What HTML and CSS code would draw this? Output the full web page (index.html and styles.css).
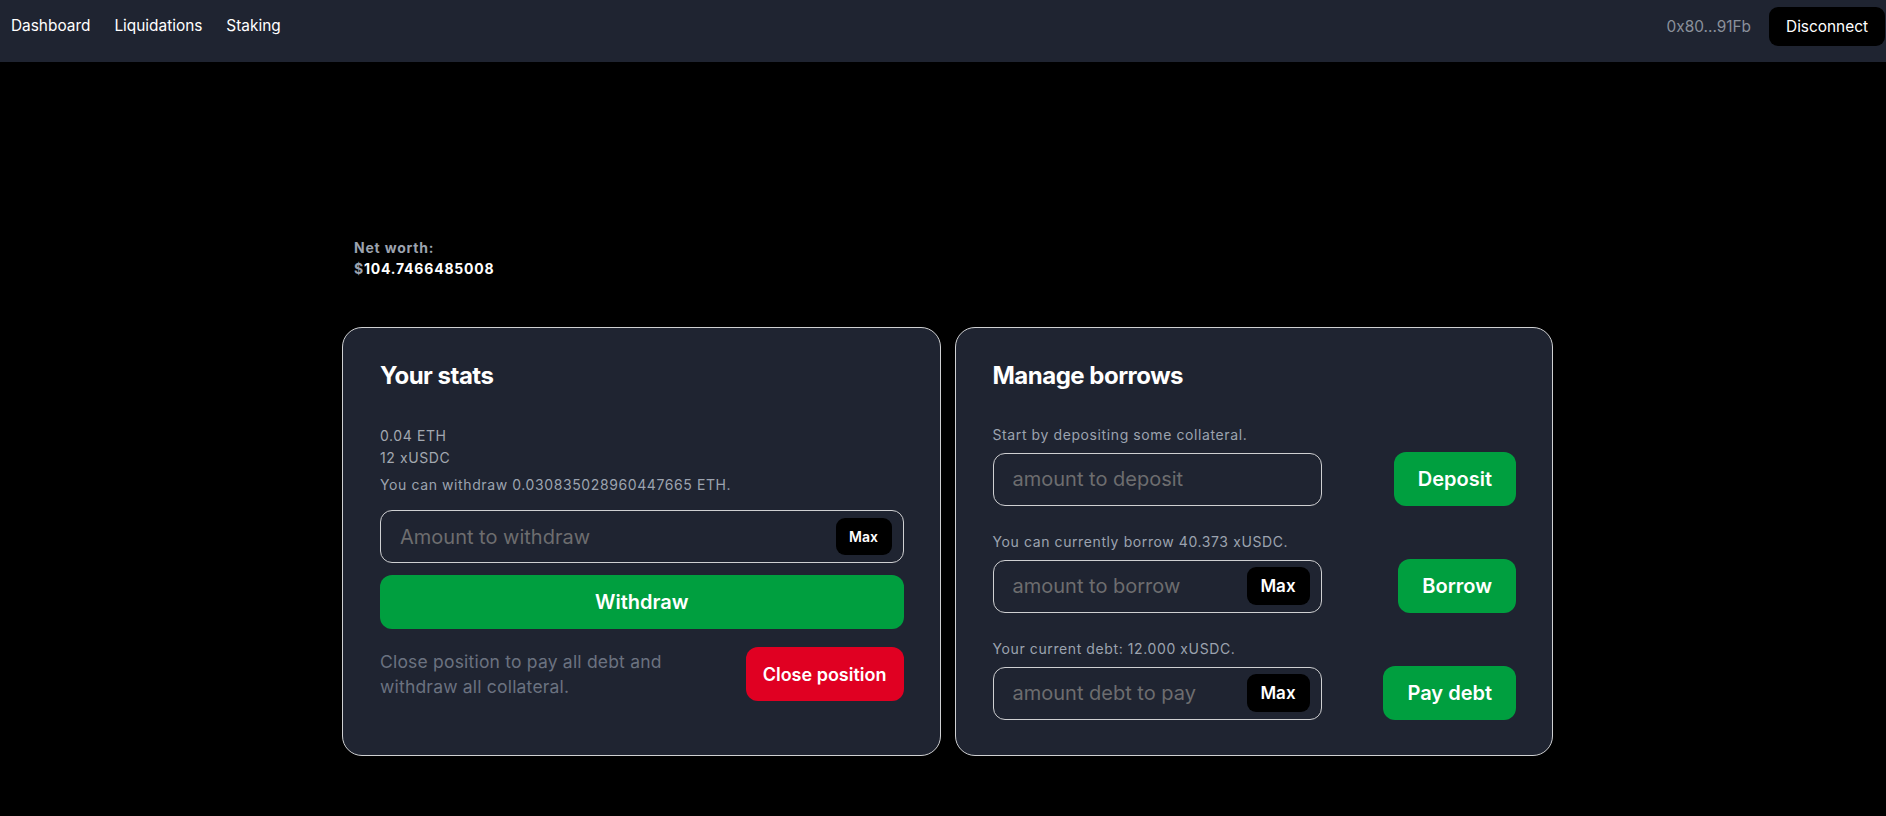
FILE: index.html
```html
<!DOCTYPE html>
<html lang="en">
<head>
<meta charset="utf-8">
<title>Dashboard</title>
<link rel="stylesheet" href="styles.css">
</head>
<body>
<nav class="topbar">
  <div class="nav-links">
    <a class="nav-link" href="#">Dashboard</a>
    <a class="nav-link" href="#">Liquidations</a>
    <a class="nav-link" href="#">Staking</a>
  </div>
  <div class="nav-right">
    <span class="address">0x80...91Fb</span>
    <button class="disconnect">Disconnect</button>
  </div>
</nav>

<main class="main">
  <div class="networth">
    <div class="networth-label">Net worth:</div>
    <div class="networth-value"><span class="dollar">$</span>104.7466485008</div>
  </div>

  <div class="cards">
    <section class="card">
      <h2 class="card-title">Your stats</h2>
      <div class="stats">
        <div>0.04 ETH</div>
        <div>12 xUSDC</div>
      </div>
      <p class="helper withdraw-note">You can withdraw 0.030835028960447665 ETH.</p>
      <div class="field field-wide">
        <input class="field-input" type="text" placeholder="Amount to withdraw">
        <button class="max max-small">Max</button>
      </div>
      <button class="btn btn-green btn-full">Withdraw</button>
      <div class="close-row">
        <p class="close-text">Close position to pay all debt and withdraw all collateral.</p>
        <button class="btn btn-red">Close position</button>
      </div>
    </section>

    <section class="card">
      <h2 class="card-title">Manage borrows</h2>
      <p class="helper">Start by depositing some collateral.</p>
      <div class="action-row">
        <div class="field field-narrow">
          <input class="field-input" type="text" placeholder="amount to deposit">
        </div>
        <button class="btn btn-green">Deposit</button>
      </div>
      <p class="helper row-note">You can currently borrow 40.373 xUSDC.</p>
      <div class="action-row">
        <div class="field field-narrow">
          <input class="field-input" type="text" placeholder="amount to borrow">
          <button class="max max-large">Max</button>
        </div>
        <button class="btn btn-green">Borrow</button>
      </div>
      <p class="helper row-note">Your current debt: 12.000 xUSDC.</p>
      <div class="action-row">
        <div class="field field-narrow">
          <input class="field-input" type="text" placeholder="amount debt to pay">
          <button class="max max-large">Max</button>
        </div>
        <button class="btn btn-green">Pay debt</button>
      </div>
    </section>
  </div>
</main>
</body>
</html>
```

FILE: styles.css
```css
* {
  box-sizing: border-box;
}

html, body {
  margin: 0;
  padding: 0;
  background: #000;
  font-family: Inter, "Noto Sans", "Liberation Sans", sans-serif;
  color: #fff;
}

button, input {
  font-family: inherit;
}

.topbar {
  height: 62px;
  background: #1f2431;
  display: flex;
  align-items: center;
  justify-content: space-between;
  padding: 0 1px 10px 11px;
}

.nav-links {
  display: flex;
  gap: 24px;
}

.nav-link {
  color: #fff;
  text-decoration: none;
  font-size: 15.4px;
  line-height: 20px;
}

.nav-right {
  display: flex;
  align-items: center;
  gap: 18px;
}

.address {
  color: #8a909b;
  font-size: 15.4px;
}

.disconnect {
  background: #000;
  color: #fff;
  border: none;
  border-radius: 9px;
  height: 39px;
  padding: 0 17px;
  font-size: 15.4px;
}

.main {
  width: 1220px;
  margin: 175px auto 0;
  padding-left: 9px;
}

.networth {
  padding-left: 12px;
  font-size: 14px;
  line-height: 21px;
  font-weight: 700;
  letter-spacing: 0.8px;
  margin-bottom: 48px;
}

.networth-label,
.dollar {
  color: #9ca3af;
}

.networth-value {
  color: #fff;
}

.cards {
  display: grid;
  grid-template-columns: 1fr 1fr;
  gap: 14px;
}

.card {
  background: #1f2431;
  border: 1px solid #cfd0d2;
  border-radius: 20px;
  padding: 32px 36px 35px 37px;
}

.card-title {
  margin: 0 0 33px;
  font-size: 24px;
  line-height: 32px;
  font-weight: 700;
  letter-spacing: -0.5px;
  color: #fff;
}

.stats {
  font-size: 14px;
  line-height: 22px;
  letter-spacing: 0.6px;
  color: #a3a8b0;
}

.helper {
  margin: 0;
  font-size: 14px;
  line-height: 20px;
  letter-spacing: 0.6px;
  color: #9ca3af;
}

.withdraw-note {
  margin-top: 6px;
}

.field {
  display: flex;
  align-items: center;
  height: 53px;
  border: 1px solid #cfd0d2;
  border-radius: 12px;
  padding: 0 11px 0 19px;
}

.field-wide {
  margin-top: 15px;
}

.field-narrow {
  width: 329px;
}

.field-input {
  flex: 1;
  min-width: 0;
  background: transparent;
  border: none;
  outline: none;
  color: #fff;
  font-size: 20px;
  padding: 0;
}

.field-input::placeholder {
  color: #6d6d6f;
}

.max {
  background: #000;
  color: #fff;
  border: none;
  border-radius: 9px;
  font-weight: 600;
  flex: none;
}

.max-small {
  width: 56px;
  height: 37px;
  font-size: 14px;
}

.max-large {
  width: 63px;
  height: 38px;
  font-size: 17px;
}

.btn {
  height: 54px;
  border: none;
  border-radius: 12px;
  color: #fff;
  font-weight: 600;
  font-size: 20px;
  padding: 0 24px;
  flex: none;
}

.btn-green {
  background: #009f3f;
}

.btn-red {
  background: #e00022;
  font-size: 18px;
  padding: 0 17px;
}

.btn-full {
  display: block;
  width: 100%;
  margin-top: 12px;
}

.close-row {
  margin-top: 18px;
  display: flex;
  align-items: center;
  justify-content: space-between;
}

.close-text {
  margin: 0;
  max-width: 310px;
  font-size: 17.5px;
  line-height: 25px;
  letter-spacing: 0.2px;
  color: #6b7280;
}

.action-row {
  margin-top: 7px;
  display: flex;
  align-items: center;
  justify-content: space-between;
}

.row-note {
  margin-top: 26px;
}
```
